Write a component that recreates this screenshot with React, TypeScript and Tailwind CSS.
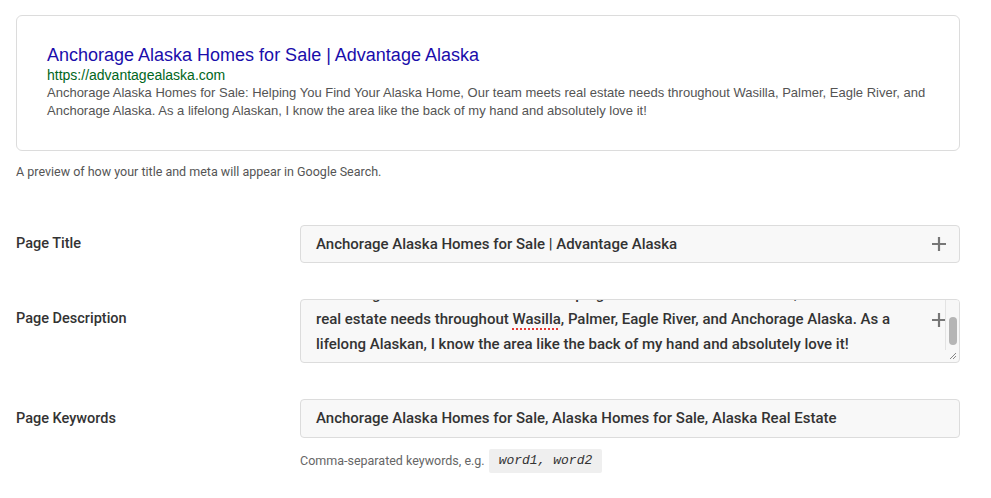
import React from "react";

function Plus({ className = "" }: { className?: string }) {
  return (
    <svg className={className} width="16" height="16" viewBox="0 0 16 16" fill="none">
      <path d="M8 1v14M1 8h14" stroke="#777" strokeWidth="2.2" />
    </svg>
  );
}

export default function App() {
  const roboto = { fontFamily: "Roboto, 'Noto Sans', sans-serif" };
  return (
    <div className="w-[991px] h-[498px] bg-white overflow-hidden" style={roboto}>
      <div className="pl-[16px] pr-[31px] pt-[15px]">
        {/* Preview card */}
        <div
          className="border border-[#dcdcdc] rounded-[6px] pt-[28px] pb-[30px] px-[30px]"
          style={{ fontFamily: "'Liberation Sans', Arial, sans-serif" }}
        >
          <div className="text-[18px] leading-[22px] text-[#1a0dab]">
            Anchorage Alaska Homes for Sale | Advantage Alaska
          </div>
          <div className="text-[14px] leading-[18px] text-[#006621]">https://advantagealaska.com</div>
          <div className="text-[13px] leading-[18px] text-[#545454]">
            Anchorage Alaska Homes for Sale: Helping You Find Your Alaska Home, Our team meets real estate needs
            throughout Wasilla, Palmer, Eagle River, and Anchorage Alaska. As a lifelong Alaskan, I know the area
            like the back of my hand and absolutely love it!
          </div>
        </div>
        <div className="mt-[13px] text-[12.5px] leading-[16px] text-[#555]">
          A preview of how your title and meta will appear in Google Search.
        </div>

        {/* Page Title */}
        <div className="mt-[45px] grid grid-cols-[284px_1fr]">
          <div className="pt-[9px] text-[14.5px] leading-[20px] font-medium text-[#333]">Page Title</div>
          <div className="h-[38px] border border-[#dcdcdc] rounded-[4px] bg-[#f8f8f8] flex items-center pl-[15px] pr-[12px]">
            <span className="flex-1 text-[15px] font-medium text-[#333] whitespace-nowrap">
              Anchorage Alaska Homes for Sale | Advantage Alaska
            </span>
            <Plus />
          </div>
        </div>

        {/* Page Description */}
        <div className="mt-[36px] grid grid-cols-[284px_1fr]">
          <div className="pt-[10px] text-[14.5px] leading-[20px] font-medium text-[#333]">Page Description</div>
          <div className="relative h-[64px] border border-[#dcdcdc] rounded-[4px] bg-[#f8f8f8] overflow-hidden">
            <div className="-mt-[18px] pl-[15px] text-[15px] leading-[25px] font-medium text-[#333] whitespace-nowrap">
              <div>Anchorage Alaska Homes for Sale: Helping You Find Your Alaska Home, Our team meets</div>
              <div>
                real estate needs throughout{" "}
                <span className="underline decoration-dotted decoration-[#e53935] decoration-2 underline-offset-[4px]">
                  Wasilla
                </span>
                , Palmer, Eagle River, and Anchorage Alaska. As a
              </div>
              <div>lifelong Alaskan, I know the area like the back of my hand and absolutely love it!</div>
            </div>
            <Plus className="absolute right-[12px] top-[12px]" />
            {/* scrollbar */}
            <div className="absolute right-0 top-0 w-[14px] h-[50px] bg-[#f7f7f7] border-l border-[#e3e3e3] flex justify-center">
              <div className="mt-[17px] w-[8px] h-[28px] rounded-full bg-[#b5b5b5]" />
            </div>
            <svg className="absolute right-[2px] bottom-[2px]" width="9" height="9" viewBox="0 0 9 9">
              <path d="M8 2L2 8M8 5L5 8" stroke="#888" strokeWidth="1" />
            </svg>
          </div>
        </div>

        {/* Page Keywords */}
        <div className="mt-[36px] grid grid-cols-[284px_1fr]">
          <div className="pt-[10px] text-[14.5px] leading-[20px] font-medium text-[#333]">Page Keywords</div>
          <div>
            <div className="h-[39px] border border-[#dcdcdc] rounded-[4px] bg-[#f8f8f8] flex items-center pl-[15px] pr-[12px]">
              <span className="flex-1 text-[15px] font-medium text-[#333] whitespace-nowrap">
                Anchorage Alaska Homes for Sale, Alaska Homes for Sale, Alaska Real Estate
              </span>
            </div>
            <div className="mt-[11px] flex items-center text-[12.5px] text-[#666]">
              <span>Comma-separated keywords, e.g.</span>
              <span
                className="ml-[4px] h-[24px] px-[10px] flex items-center bg-[#efefef] rounded-[2px] italic text-[13px] text-[#333]"
                style={{ fontFamily: "'Liberation Mono', 'DejaVu Sans Mono', monospace" }}
              >
                word1, word2
              </span>
            </div>
          </div>
        </div>
      </div>
    </div>
  );
}
